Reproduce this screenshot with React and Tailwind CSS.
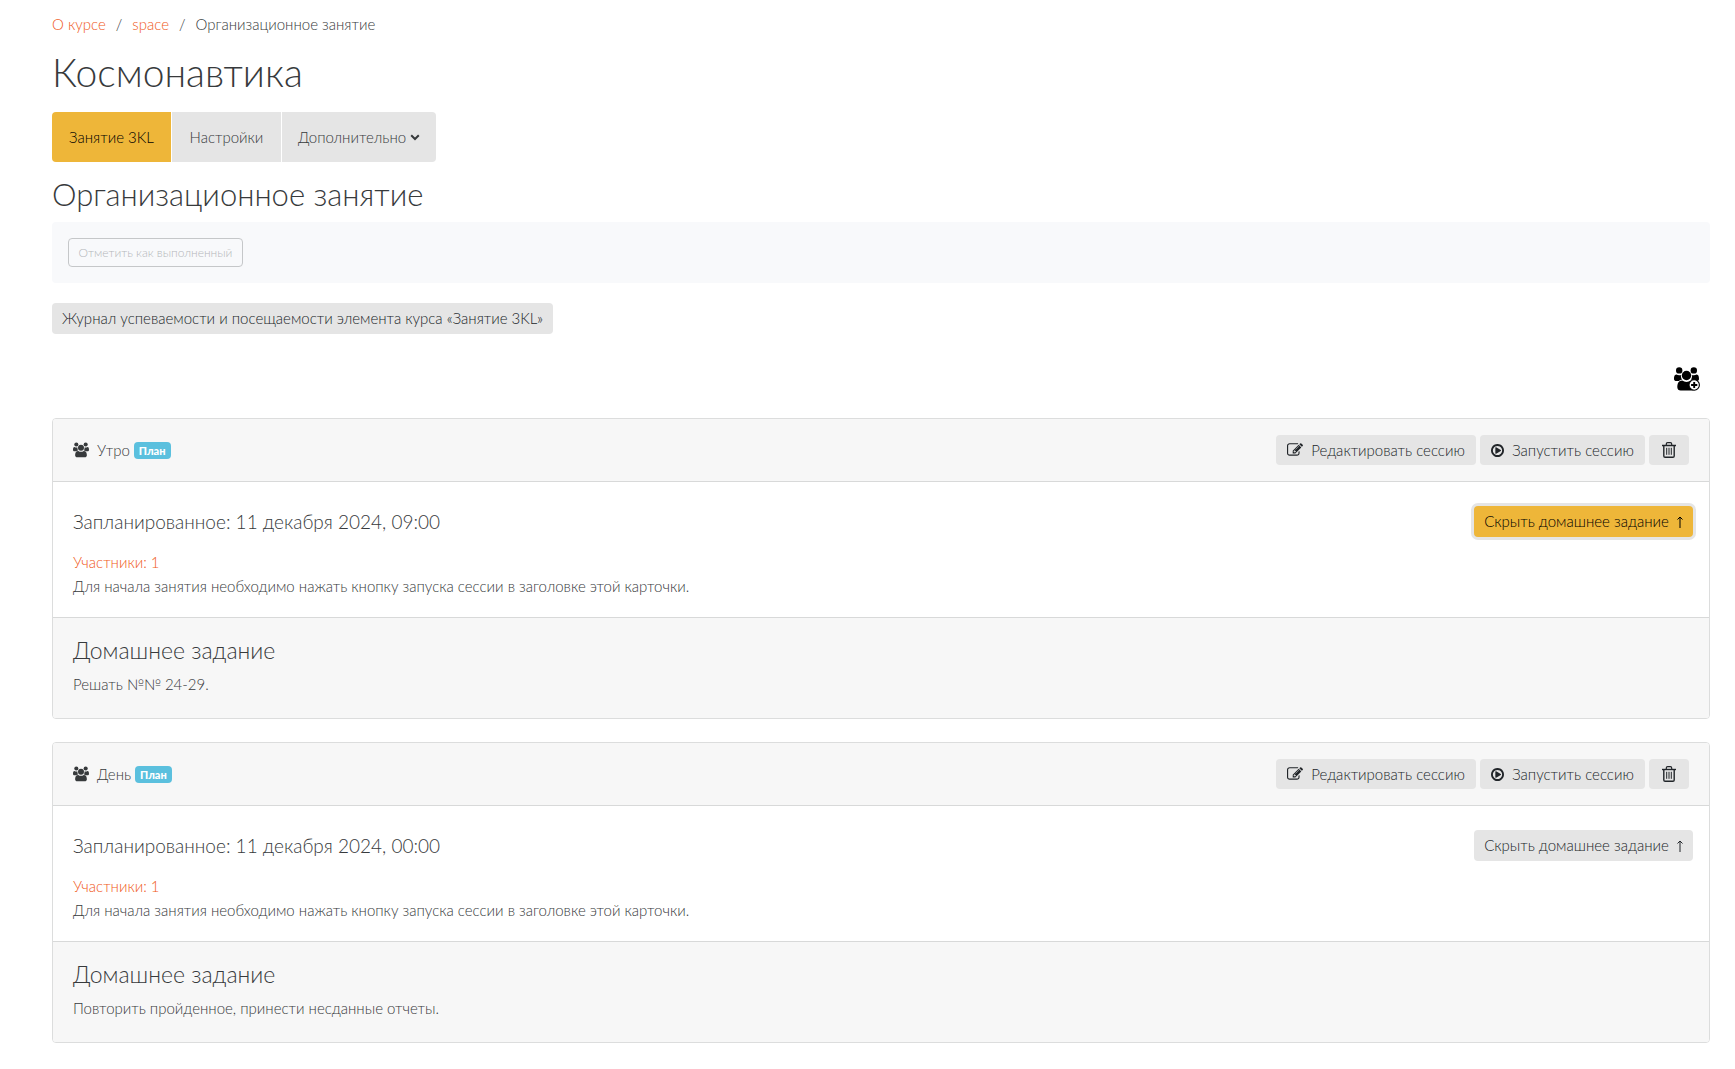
import { useState } from "react";

const sessions = [
  {
    id: 1,
    name: "Утро",
    date: "11 декабря 2024, 09:00",
    homework: "Решать №№ 24-29.",
    active: true,
  },
  {
    id: 2,
    name: "День",
    date: "11 декабря 2024, 00:00",
    homework: "Повторить пройденное, принести несданные отчеты.",
    active: false,
  },
];

function UsersIcon({ className, plus }) {
  return (
    <svg viewBox={plus ? "0 0 26 24" : "0 0 25 24"} className={className} fill="currentColor" aria-hidden="true">
      <circle cx="5.2" cy="3.4" r="3.2" />
      <circle cx="19.8" cy="3.4" r="3.2" />
      <path d="M2.4 7.4c.8.5 1.8.8 2.800.8.7 0 1.200-.1 1.700-.3v.8c0 1.500.5 3 1.300 4.100-1.500 0-2.500.5-3.300 1.200H2.500C1.100 14 0 13.300 0 11.900 0 10.400.2 7.400 2.400 7.400z" />
      <path d="M22.600 7.400c-.8.5-1.800.8-2.800.8-.7 0-1.200-.1-1.700-.3v.8c0 1.500-.5 3-1.300 4.100 1.500 0 2.500.5 3.300 1.200h2.400c1.400 0 2.500-.7 2.500-2.100 0-1.500-.2-4.500-2.400-4.500z" />
      <circle cx="12.500" cy="8.500" r="4.700" />
      <path d="M8.300 13.500c1.200.9 2.700 1.400 4.200 1.400s3-.5 4.200-1.400c3.900 0 5 3.100 5 6.700 0 2-1.400 3.300-3.400 3.300H6.700c-2 0-3.400-1.300-3.400-3.300 0-3.600 1.100-6.700 5-6.700z" />
      {plus && (
        <>
          <circle cx="20.200" cy="18" r="5.200" fill="white" stroke="currentColor" strokeWidth="1.100" />
          <path d="M20.200 14.900v6.200M17.100 18h6.200" stroke="currentColor" strokeWidth="1.900" />
        </>
      )}
    </svg>
  );
}

function EditIcon() {
  return (
    <svg viewBox="0 0 1792 1792" className="size-4" fill="currentColor" aria-hidden="true">
      <path d="M888 1184l116-116-152-152-116 116v56h96v96h56zm440-720q-16-16-33 1l-350 350q-17 17-1 33t33-1l350-350q17-17 1-33zm80 594v190q0 119-84.500 203.500t-203.500 84.500h-832q-119 0-203.500-84.500t-84.500-203.500v-832q0-119 84.500-203.500t203.500-84.500h832q63 0 117 25 15 7 18 23 3 17-9 29l-49 49q-14 14-32 8-23-6-45-6h-832q-66 0-113 47t-47 113v832q0 66 47 113t113 47h832q66 0 113-47t47-113v-126q0-13 9-22l64-64q15-15 35-7t20 29zm-96-738l288 288-672 672h-288v-288zm444 132l-92 92-288-288 92-92q28-28 68-28t68 28l152 152q28 28 28 68t-28 68z" />
    </svg>
  );
}

function PlayIcon() {
  return (
    <svg viewBox="0 128 1536 1536" className="size-[13px]" fill="currentColor" aria-hidden="true">
      <path d="M1184 896q0 37-32 55l-544 320q-15 9-32 9-16 0-32-8-32-19-32-56v-640q0-37 32-56 33-18 64 1l544 320q32 18 32 55zm128 0q0-148-73-273t-198-198-273-73-273 73-198 198-73 273 73 273 198 198 273 73 273-73 198-198 73-273zm224 0q0 209-103 385.500t-279.500 279.500-385.500 103-385.500-103-279.500-279.500-103-385.500 103-385.500 279.500-279.500 385.500-103 385.500 103 279.500 279.500 103 385.500z" />
    </svg>
  );
}

function TrashIcon() {
  return (
    <svg viewBox="0 0 14 16" className="h-4 w-3.5" fill="none" stroke="currentColor" aria-hidden="true">
      <path d="M0 3.500h14" strokeWidth="1.400" />
      <path d="M4.300 3.200V2c0-.8.5-1.300 1.300-1.300h2.800c.8 0 1.300.5 1.300 1.300v1.200" strokeWidth="1.200" />
      <path d="M1.800 3.500V14c0 .8.500 1.300 1.300 1.300h7.800c.8 0 1.300-.5 1.300-1.300V3.500" strokeWidth="1.400" />
      <path d="M4.700 5.800v7M7 5.800v7M9.300 5.800v7" strokeWidth="1" />
    </svg>
  );
}

function ArrowUp() {
  return (
    <svg viewBox="0 0 6 12" className="h-3 w-1.5" fill="none" stroke="currentColor" aria-hidden="true">
      <path d="M3 12V1M.5 3.500L3 1l2.500 2.500" />
    </svg>
  );
}

function SessionCard({ session }) {
  const [open, setOpen] = useState(true);

  return (
    <section className="mb-[23px] overflow-hidden rounded border border-[#dcdddd]">
      <header className="flex h-[63px] items-center justify-between border-b border-[#d8d9d9] bg-[#f7f7f7] px-5">
        <div className="flex items-center">
          <UsersIcon className="h-4 w-4" />
          <span className="ml-2">{session.name}</span>
          <span className="ml-1 rounded bg-[#5bc0de] px-[5px] text-[11px] leading-[17px] font-black text-white">
            План
          </span>
        </div>
        <div className="flex gap-1 text-[#212529]">
          <button className="flex h-[30px] w-[200px] items-center justify-center gap-2 rounded bg-[#e5e5e5]">
            <EditIcon />
            Редактировать сессию
          </button>
          <button className="flex h-[30px] w-[165px] items-center justify-center gap-2 rounded bg-[#e5e5e5]">
            <PlayIcon />
            Запустить сессию
          </button>
          <button aria-label="Удалить" className="flex h-[30px] w-10 items-center justify-center rounded bg-[#e5e5e5]">
            <TrashIcon />
          </button>
        </div>
      </header>

      <div className="flex items-start justify-between pt-6 pr-4 pb-[19px] pl-5">
        <div>
          <h4 className="mb-3 text-[19px] leading-8">Запланированное: {session.date}</h4>
          <a href="#" className="block leading-6 text-[#f05a22]">
            Участники: 1
          </a>
          <p className="leading-6">
            Для начала занятия необходимо нажать кнопку запуска сессии в заголовке этой карточки.
          </p>
        </div>
        <button
          onClick={() => setOpen(!open)}
          className={`flex h-[31px] w-[219px] items-center justify-center gap-2 rounded ${
            session.active ? "bg-[#eeb639] text-black ring-3 ring-[#e5e5e5]" : "bg-[#e5e5e5] text-[#212529]"
          }`}
        >
          Скрыть домашнее задание
          <ArrowUp />
        </button>
      </div>

      {open && (
        <div className="border-t border-[#d8d9d9] bg-[#f7f7f7] px-5 pt-[18px] pb-[22px]">
          <h3 className="mb-2 text-[23px] leading-7">Домашнее задание</h3>
          <p className="leading-6">{session.homework}</p>
        </div>
      )}
    </section>
  );
}

export default function App() {
  return (
    <main className="min-h-screen bg-white pt-3 pr-[25px] pl-[52px] font-[Lato,sans-serif] text-[15px] font-light text-[#373a3c]">
      <nav className="flex gap-2.5 leading-6">
        <a href="#" className="text-[#f05a22]">
          О курсе
        </a>
        <span>/</span>
        <a href="#" className="text-[#f05a22]">
          space
        </a>
        <span>/</span>
        <span>Организационное занятие</span>
      </nav>

      <h1 className="mt-3.5 text-[39px] leading-11">Космонавтика</h1>

      <nav className="mt-4.5 flex w-fit gap-px overflow-hidden rounded">
        <a href="#" className="flex h-[50px] w-[119px] items-center justify-center bg-[#eeb639] text-black">
          Занятие 3KL
        </a>
        <a href="#" className="flex h-[50px] w-[109px] items-center justify-center bg-[#e5e5e5]">
          Настройки
        </a>
        <button className="flex h-[50px] w-[154px] items-center justify-center gap-1 bg-[#e5e5e5]">
          Дополнительно
          <svg viewBox="0 0 10 7" className="w-2.5" fill="none" stroke="currentColor" strokeWidth="2" aria-hidden="true">
            <path d="M1.200 1.200L5 5l3.800-3.800" />
          </svg>
        </button>
      </nav>

      <h2 className="mt-3.5 text-[31px] leading-9">Организационное занятие</h2>

      <div className="mt-2.5 rounded bg-[#f8f9fb] p-4">
        <button
          disabled
          className="block h-[29px] w-[175px] rounded border border-[#c5c7c9] text-[12px] text-[#b4b7ba]"
        >
          Отметить как выполненный
        </button>
      </div>

      <button className="mt-5 block h-[31px] w-[501px] rounded bg-[#e5e5e5] text-[#212529]">
        Журнал успеваемости и посещаемости элемента курса «Занятие 3KL»
      </button>

      <div className="mt-[33px] mb-[27px] flex justify-end pr-2.5">
        <button aria-label="Добавить сессию" className="text-black">
          <UsersIcon plus className="h-6 w-[26px]" />
        </button>
      </div>

      {sessions.map((session) => (
        <SessionCard key={session.id} session={session} />
      ))}
    </main>
  );
}
